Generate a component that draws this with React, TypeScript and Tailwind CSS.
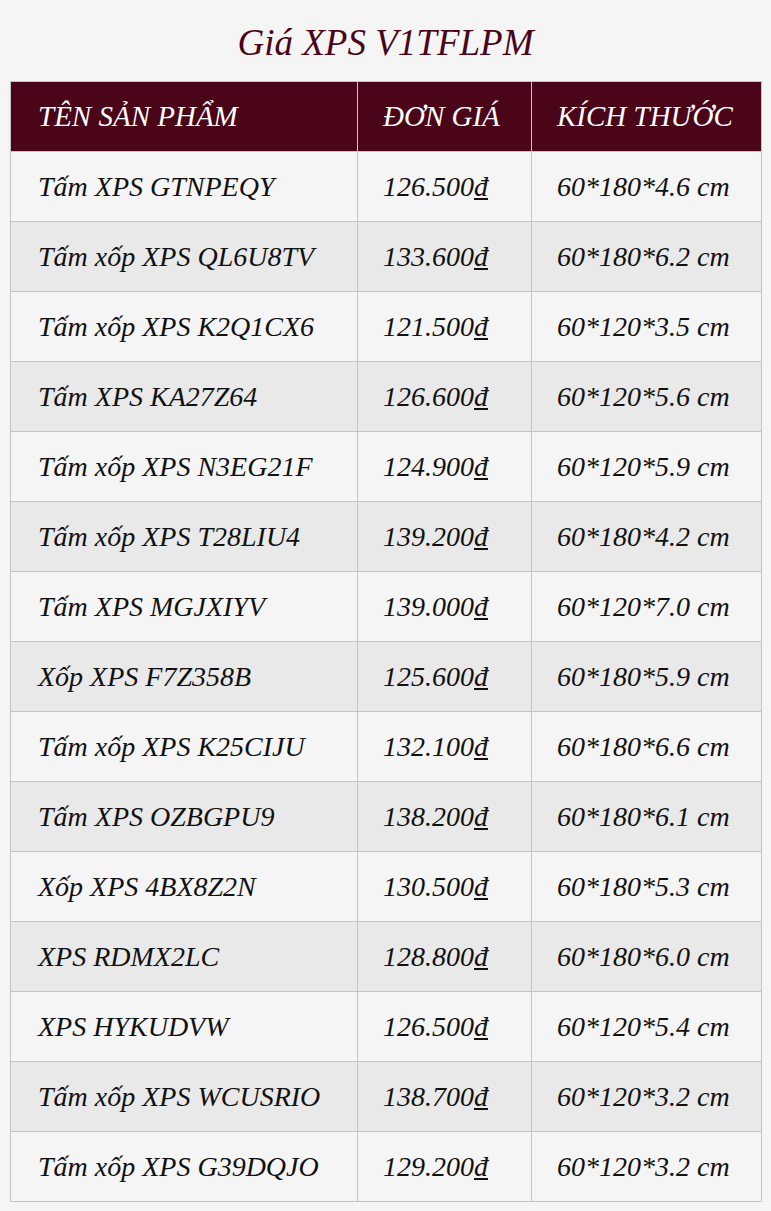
const rows: [string, string, string][] = [
  ["Tấm XPS GTNPEQY", "126.500₫", "60*180*4.6 cm"],
  ["Tấm xốp XPS QL6U8TV", "133.600₫", "60*180*6.2 cm"],
  ["Tấm xốp XPS K2Q1CX6", "121.500₫", "60*120*3.5 cm"],
  ["Tấm XPS KA27Z64", "126.600₫", "60*120*5.6 cm"],
  ["Tấm xốp XPS N3EG21F", "124.900₫", "60*120*5.9 cm"],
  ["Tấm xốp XPS T28LIU4", "139.200₫", "60*180*4.2 cm"],
  ["Tấm XPS MGJXIYV", "139.000₫", "60*120*7.0 cm"],
  ["Xốp XPS F7Z358B", "125.600₫", "60*180*5.9 cm"],
  ["Tấm xốp XPS K25CIJU", "132.100₫", "60*180*6.6 cm"],
  ["Tấm XPS OZBGPU9", "138.200₫", "60*180*6.1 cm"],
  ["Xốp XPS 4BX8Z2N", "130.500₫", "60*180*5.3 cm"],
  ["XPS RDMX2LC", "128.800₫", "60*180*6.0 cm"],
  ["XPS HYKUDVW", "126.500₫", "60*120*5.4 cm"],
  ["Tấm xốp XPS WCUSRIO", "138.700₫", "60*120*3.2 cm"],
  ["Tấm xốp XPS G39DQJO", "129.200₫", "60*120*3.2 cm"],
];

export default function App() {
  return (
    <div className="min-h-[1211px] bg-[#f5f5f5] px-[10px] pt-[22px] pb-[10px] font-['Liberation_Serif',serif] italic">
      <h1 className="text-center text-[37px] leading-[42px] text-[#4a0519] mb-[17px]">Giá XPS V1TFLPM</h1>
      <table className="w-[751px] table-fixed border-collapse text-[28px]">
        <colgroup>
          <col className="w-[347px]" />
          <col className="w-[174px]" />
          <col className="w-[230px]" />
        </colgroup>
        <thead>
          <tr className="h-[70px] bg-[#4a0519] text-white text-[29px]">
            <th className="border border-[#c4c4c4] pl-[27px] text-left font-normal">TÊN SẢN PHẨM</th>
            <th className="border border-[#c4c4c4] pl-[25px] text-left font-normal">ĐƠN GIÁ</th>
            <th className="border border-[#c4c4c4] pl-[25px] text-left font-normal">KÍCH THƯỚC</th>
          </tr>
        </thead>
        <tbody>
          {rows.map((r, i) => (
            <tr key={i} className={`h-[70px] text-[#111] ${i % 2 === 1 ? "bg-[#e9e9e9]" : "bg-[#f5f5f5]"}`}>
              <td className="border border-[#c4c4c4] pl-[27px]">{r[0]}</td>
              <td className="border border-[#c4c4c4] pl-[25px]">
                {r[1].slice(0, -1)}
                <span className="underline">đ</span>
              </td>
              <td className="border border-[#c4c4c4] pl-[25px]">{r[2]}</td>
            </tr>
          ))}
        </tbody>
      </table>
    </div>
  );
}
